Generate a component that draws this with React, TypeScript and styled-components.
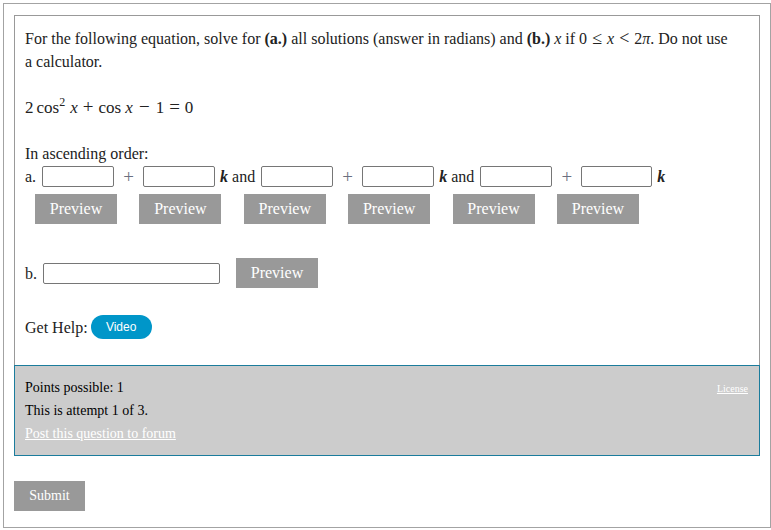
import styled, { createGlobalStyle } from 'styled-components';

const GlobalStyle = createGlobalStyle`
  body {
    margin: 0;
    background: #fff;
    font-family: "Liberation Serif", "Times New Roman", serif;
    color: #222;
  }
`;

const Page = styled.div`
  padding: 3px 0 0 3px;
`;
const Frame = styled.div`
  box-sizing: border-box;
  width: 768px;
  height: 525px;
  border: 1px solid #a3a3a3;
  padding: 11px 10px 0 10px;
`;
const QuestionBox = styled.div`
  border: 1px solid #999;
  border-bottom: none;
  padding: 11px 10px 26px 10px;
  font-size: 16px;
  line-height: 23px;
`;
const Para = styled.p`
  margin: 0 0 23px 0;
`;
const MathI = styled.i`
  font-family: "Liberation Serif", serif;
  font-style: italic;
`;
const Rel = styled.span`
  margin: 0 5px;
  font-size: 18px;
  line-height: 1;
`;
const Op = styled.span<{ gap?: number }>`
  margin: 0 ${(p) => p.gap ?? 5}px;
  font-size: 19px;
  line-height: 1;
`;
const Equation = styled.div`
  height: 23px;
  margin-bottom: 23px;
  font-size: 17px;
  line-height: 23px;
`;
const Sup = styled.sup`
  font-size: 12px;
  line-height: 0;
  margin-right: 5px;
`;
const Thin = styled.span`
  margin-left: 3px;
`;
const Row = styled.div`
  display: flex;
  align-items: center;
  height: 23px;
`;
const Label = styled.span`
  margin-right: 6px;
`;
const Input = styled.input<{ w?: number }>`
  box-sizing: border-box;
  width: ${(p) => p.w ?? 72}px;
  height: 21px;
  border: 1px solid #767676;
  border-radius: 2px;
  margin: 0;
  padding: 0 2px;
`;
const Plus = styled.span`
  width: 29px;
  text-align: center;
  color: #6b6f80;
  font-size: 19px;
`;
const KText = styled.span`
  margin: 0 6px 0 5px;
  i {
    font-weight: bold;
    margin-right: 4px;
  }
`;
const PreviewRow = styled.div`
  display: flex;
  gap: 22.4px;
  padding-left: 10px;
  margin-top: 6px;
`;
const GrayButton = styled.button<{ w: number; size: number }>`
  box-sizing: border-box;
  width: ${(p) => p.w}px;
  height: 30px;
  border: none;
  border-radius: 0;
  background: #999;
  color: #fff;
  font-family: "Liberation Serif", "Times New Roman", serif;
  font-size: ${(p) => p.size}px;
  padding: 0;
  cursor: pointer;
`;
const BRow = styled.div`
  display: flex;
  align-items: center;
  margin-top: 34px;
  height: 30px;
  button {
    margin-left: 16px;
  }
`;
const HelpRow = styled.div`
  display: flex;
  align-items: center;
  margin-top: 27px;
  height: 24px;
`;
const VideoPill = styled.span`
  display: inline-flex;
  align-items: center;
  justify-content: center;
  margin-left: 3px;
  width: 61px;
  height: 24px;
  border-radius: 12px;
  background: #0096c9;
  color: #fff;
  font-family: "Liberation Sans", Arial, sans-serif;
  font-size: 12px;
`;
const Footer = styled.div`
  display: flex;
  justify-content: space-between;
  background: #ccc;
  border: 1px solid #1b7c9c;
  padding: 10px 11px 10px 10px;
  font-size: 14px;
  line-height: 23px;
  color: #000;
`;
const FooterLink = styled.a<{ small?: boolean }>`
  color: #fff;
  text-decoration: underline;
  font-size: ${(p) => (p.small ? 10 : 14)}px;
  line-height: ${(p) => (p.small ? '23px' : 'inherit')};
`;
const SubmitWrap = styled.div`
  margin-top: 25px;
`;

export default function App() {
  return (
    <Page>
      <GlobalStyle />
      <Frame>
        <QuestionBox>
          <Para>
            For the following equation, solve for <b>(a.)</b> all solutions (answer in radians) and <b>(b.)</b>{' '}
            <MathI>x</MathI> if 0<Rel>≤</Rel>
            <MathI>x</MathI>
            <Rel>&lt;</Rel>2<MathI>π</MathI>. Do not use
            <br />a calculator.
          </Para>
          <Equation>
            2<Thin>cos</Thin>
            <Sup>2</Sup>
            <MathI>x</MathI>
            <Op>+</Op>cos <MathI>x</MathI>
            <Op gap={6}>−</Op>1<Op>=</Op>0
          </Equation>
          <div>In ascending order:</div>
          <Row>
            <Label>a.</Label>
            <Input />
            <Plus>+</Plus>
            <Input />
            <KText>
              <MathI>k</MathI>and
            </KText>
            <Input />
            <Plus>+</Plus>
            <Input />
            <KText>
              <MathI>k</MathI>and
            </KText>
            <Input />
            <Plus>+</Plus>
            <Input w={71} />
            <KText>
              <MathI>k</MathI>
            </KText>
          </Row>
          <PreviewRow>
            {[0, 1, 2, 3, 4, 5].map((i) => (
              <GrayButton key={i} w={82} size={16}>
                Preview
              </GrayButton>
            ))}
          </PreviewRow>
          <BRow>
            <Label>b.</Label>
            <Input w={177} />
            <GrayButton w={82} size={16}>
              Preview
            </GrayButton>
          </BRow>
          <HelpRow>
            Get Help:
            <VideoPill>Video</VideoPill>
          </HelpRow>
        </QuestionBox>
        <Footer>
          <div>
            <div>Points possible: 1</div>
            <div>This is attempt 1 of 3.</div>
            <FooterLink href="#">Post this question to forum</FooterLink>
          </div>
          <div>
            <FooterLink href="#" small>
              License
            </FooterLink>
          </div>
        </Footer>
        <SubmitWrap>
          <GrayButton w={71} size={14}>
            Submit
          </GrayButton>
        </SubmitWrap>
      </Frame>
    </Page>
  );
}
